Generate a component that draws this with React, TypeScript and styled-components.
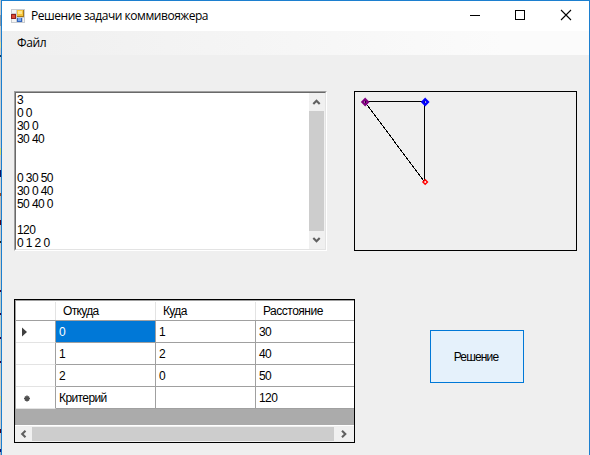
import React from 'react';
import styled, { createGlobalStyle } from 'styled-components';

const Global = createGlobalStyle`
  * { box-sizing: border-box; }
  body { margin: 0; overflow: hidden; background: #efefef; }
`;

const Screen = styled.div`
  display: flex;
  width: 590px;
  height: 455px;
  color: #000;
  font: 12px/13px 'Liberation Sans', Arial, sans-serif;
  letter-spacing: -0.6px;
`;

const Backdrop = styled.div`
  width: 1px;
  background: linear-gradient(#c9c9c9 0 15px, #8a97a4 15px 26px, #c9c9c9 26px 42px, #dddca0 42px 48px,
    #c9c9c9 48px 55px, #10395f 55px 57px, #c5cdd2 57px 148px, #dcdc70 148px 155px, #c9c9c9 155px 170px,
    #101060 170px 177px, #d0d0d0 177px 193px, #9a4a20 193px 196px, #bbb 196px 220px, #500018 220px 225px,
    #c9c9c9 225px 241px, #222 241px 243px, #d0d0c8 243px 290px, #400030 290px 292px, #b9c9c9 292px 313px,
    #300040 313px 315px, #b9c9c9 315px 337px, #300040 337px 339px, #b9c9c9 339px 361px, #300040 361px 363px,
    #ccccc4 363px 396px, #d5d58a 396px 402px, #c9c9c9 402px 429px, #400020 429px 433px, #c9c9c9 433px 449px,
    #101070 449px 452px, #aab 452px);
`;

const Window = styled.div`
  display: flex;
  flex-direction: column;
  width: 589px;
  border: 1px solid #1c7fcf;
  border-bottom: 0;
  background: #efefef;
`;

const TitleBar = styled.div`
  display: flex;
  align-items: center;
  height: 30px;
  padding-left: 9px;
  background: #fff;
`;

const Title = styled.div`
  flex: 1;
  padding: 0 0 1px 6px;
  font: 12px/16px 'Open Sans', 'Noto Sans', sans-serif;
  letter-spacing: -0.46px;
  white-space: nowrap;
`;

const Controls = styled.svg`
  display: block;
  width: 138px;
  height: 30px;
`;

const MenuBar = styled.div`
  height: 24px;
  padding: 4px 0 0 15px;
  background: linear-gradient(90deg, #efefef, #fbfbfb 85%);
  font: 12px/16px 'Open Sans', 'Noto Sans', sans-serif;
  letter-spacing: -0.4px;
`;

const Content = styled.div`
  display: flex;
  flex-direction: column;
  gap: 48px;
  padding: 36px 0 0 12px;
`;

const Row = styled.div<{ $gap: number }>`
  display: flex;
  align-items: flex-start;
  gap: ${p => p.$gap}px;
`;

const TextFrame = styled.div`
  width: 313px;
  height: 160px;
  border: 1px solid;
  border-color: #a0a0a0 #fff #fff #a0a0a0;
`;

const TextArea = styled.div`
  display: flex;
  height: 158px;
  border: 1px solid;
  border-color: #696969 #e3e3e3 #e3e3e3 #696969;
  background: #fff;
`;

const Text = styled.div`
  flex: 1;
  padding: 1px 0 0 1px;
  overflow: hidden;
  white-space: pre;
`;

const Scroll = styled.div<{ $horizontal?: boolean }>`
  display: flex;
  flex-direction: ${p => (p.$horizontal ? 'row' : 'column')};
  width: ${p => (p.$horizontal ? 'auto' : '16px')};
  height: ${p => (p.$horizontal ? '17px' : 'auto')};
  padding: ${p => (p.$horizontal ? '1px 0' : '0 1px 0 0')};
  background: #f0f0f0;
  border-top: ${p => (p.$horizontal ? '1px solid #fff' : '0')};
`;

const Thumb = styled.div`
  flex: 1;
  background: #cdcdcd;
`;

const Arrow = styled.svg`
  display: block;
  flex: none;
`;

const Canvas = styled.svg`
  display: block;
  width: 223px;
  height: 160px;
  border: 1px solid #000;
`;

const Grid = styled.div`
  display: flex;
  flex-direction: column;
  width: 341px;
  height: 144px;
  border: 1px solid #000;
  background: #ababab;
`;

const Cells = styled.div`
  flex: 1;
  display: grid;
  grid-template-columns: 40px 100px 100px 98px;
  grid-template-rows: 21px repeat(4, 22px);
  width: 339px;
  border-top: 1px solid #a0a0a0;
  border-left: 1px solid #a0a0a0;
`;

const HeadCell = styled.div<{ $last?: boolean }>`
  height: 20px;
  padding: 4px 0 0 7px;
  background: linear-gradient(#e3e3e3, #e3e3e3) right bottom / ${p => (p.$last ? 0 : 1)}px 18px no-repeat #fff;
  border-bottom: 1px solid #a0a0a0;
  letter-spacing: ${p => (p.$last ? -0.5 : -0.65)}px;
`;

const RowHead = styled.div`
  height: 22px;
  margin-top: -1px;
  background: #fff;
  border-right: 1px solid #a0a0a0;
  border-bottom: 1px solid #e3e3e3;
`;

const Cell = styled.div<{ $selected?: boolean; $last?: boolean }>`
  height: 22px;
  margin-top: -1px;
  padding: 5px 0 0 3px;
  background: ${p => (p.$selected ? '#0078d7' : '#fff')};
  color: ${p => (p.$selected ? '#fff' : '#000')};
  border-right: ${p => (p.$last ? 0 : 1)}px solid #a0a0a0;
  border-bottom: 1px solid #a0a0a0;
`;

const SolveButton = styled.button`
  width: 94px;
  height: 53px;
  margin-top: 31px;
  padding: 2px 2px 0 0;
  border: 1px solid #0078d7;
  background: #e5f1fb;
  color: #000;
  font: inherit;
  letter-spacing: -0.85px;
`;

const AppIcon = () => (
  <svg width="14" height="14" viewBox="0 0 14 14" shapeRendering="crispEdges">
    <path fill="#c8ccd0" d="M0 0h14v14H0z" />
    <path fill="#f4f4f4" d="M1 1h4v3H1zM1 10h4v3H1zM12 9h1v4h-1z" />
    <path fill="#8e2020" d="M0 5h5v5H0z" />
    <path fill="#dc4a32" d="M1 6h3v3H1z" />
    <path fill="#a87818" d="M6 1h7v7H6z" />
    <path fill="#f6c63c" d="M6 1h6v6H6z" />
    <path fill="#ffe58c" d="M7 2h4v3H7z" />
    <path fill="#3465bd" d="M6 9h5v4H6z" />
    <path fill="#79aaf0" d="M7 9h3v3H7z" />
  </svg>
);

const ROTATION = { up: 0, right: 90, down: 180, left: 270 };

function ScrollArrow({ dir, width, height }: { dir: keyof typeof ROTATION; width: number; height: number }) {
  return (
    <Arrow width={width} height={height} viewBox={`${-width / 2} ${-height / 2} ${width} ${height}`}>
      <path d="M-3.2 2 0-1.3 3.2 2" fill="none" stroke="#606060" strokeWidth="2.1" transform={`rotate(${ROTATION[dir]})`} />
    </Arrow>
  );
}

const ring = (x: number, y: number, r: number) =>
  `M${x} ${y - r}l${r} ${r}l${-r} ${r}l${-r} ${-r}z`;

const notes = `3
0 0
30 0
30 40


0 30 50
30 0 40
50 40 0

120
0 1 2 0`;

const rows = [['0', '1', '30'], ['1', '2', '40'], ['2', '0', '50'], ['Критерий', '', '120']];

export default function App() {
  return (
    <Screen>
      <Global />
      <Backdrop />
      <Window>
        <TitleBar>
          <AppIcon />
          <Title>Решение задачи коммивояжера</Title>
          <Controls viewBox="0 0 138 30" fill="none" stroke="#000">
            <path d="M19 14.5h10M64.5 9.5h9v9h-9z" shapeRendering="crispEdges" />
            <path d="M110 9l10 10M120 9l-10 10" strokeWidth="1.1" />
          </Controls>
        </TitleBar>
        <MenuBar>Файл</MenuBar>
        <Content>
          <Row $gap={27}>
            <TextFrame>
              <TextArea>
                <Text>{notes}</Text>
                <Scroll>
                  <ScrollArrow dir="up" width={15} height={18} />
                  <Thumb />
                  <ScrollArrow dir="down" width={15} height={18} />
                </Scroll>
              </TextArea>
            </TextFrame>
            <Canvas viewBox="0 0 221 158" fill="none">
              <path d="M10 9.5h60M69.5 10v80L10 10" stroke="#000" shapeRendering="crispEdges" />
              <path d={ring(10.2, 10, 2.7)} stroke="#800080" strokeWidth="2.4" />
              <path d={ring(70.2, 10, 2.7)} stroke="#0000ff" strokeWidth="2.4" />
              <path d={ring(70.2, 90, 2.2)} fill="#fff" stroke="#ff0000" strokeWidth="1.5" />
            </Canvas>
          </Row>
          <Row $gap={75}>
            <Grid>
              <Cells>
                <HeadCell />
                <HeadCell>Откуда</HeadCell>
                <HeadCell>Куда</HeadCell>
                <HeadCell $last>Расстояние</HeadCell>
                {rows.map((r, i) => (
                  <React.Fragment key={i}>
                    <RowHead>
                      <svg width="20" height="21" viewBox="0 0 20 21">
                        {i === 0 && <path fill="#404040" d="M6 6.5v9l5-4.5z" />}
                        {i === 3 && <path stroke="#505050" strokeWidth="1.5" d="M11 8.5v6M8 11.5h6M9 9.5l4 4M13 9.5l-4 4" />}
                      </svg>
                    </RowHead>
                    {r.map((c, j) => (
                      <Cell key={j} $selected={i === 0 && j === 0} $last={j === 2}>{c}</Cell>
                    ))}
                  </React.Fragment>
                ))}
              </Cells>
              <Scroll $horizontal>
                <ScrollArrow dir="left" width={17} height={14} />
                <Thumb />
                <ScrollArrow dir="right" width={20} height={14} />
              </Scroll>
            </Grid>
            <SolveButton>Решение</SolveButton>
          </Row>
        </Content>
      </Window>
    </Screen>
  );
}
